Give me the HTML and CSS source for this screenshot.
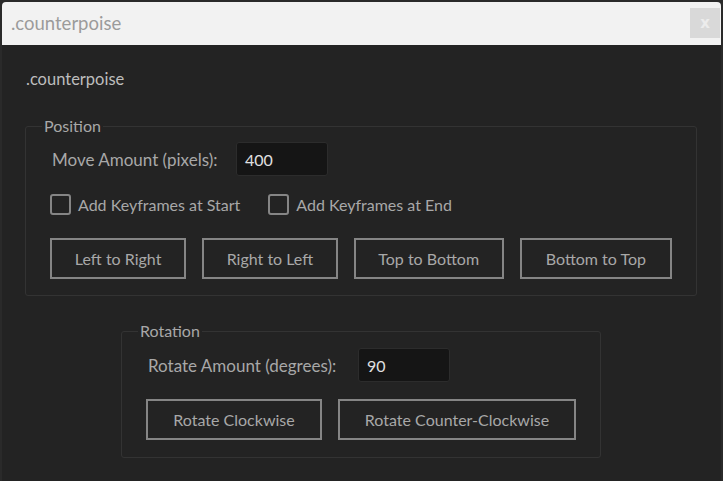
FILE: index.html
```html
<!DOCTYPE html>
<html>
<head>
<meta charset="utf-8">
<link rel="stylesheet" href="styles.css">
</head>
<body>
<div class="window">
  <div class="titlebar">
    <span class="title">.counterpoise</span>
    <span class="close">x</span>
  </div>
  <div class="content">
    <div class="app-label">.counterpoise</div>
    <fieldset class="group group-position">
      <legend>Position</legend>
      <div class="field-row">
        <label class="field-label">Move Amount (pixels):</label>
        <div class="input">400</div>
      </div>
      <div class="check-row">
        <label class="check"><span class="box"></span>Add Keyframes at Start</label>
        <label class="check"><span class="box"></span>Add Keyframes at End</label>
      </div>
      <div class="button-row">
        <button class="btn btn-lr">Left to Right</button>
        <button class="btn btn-rl">Right to Left</button>
        <button class="btn btn-tb">Top to Bottom</button>
        <button class="btn btn-bt">Bottom to Top</button>
      </div>
    </fieldset>
    <fieldset class="group group-rotation">
      <legend>Rotation</legend>
      <div class="field-row">
        <label class="field-label">Rotate Amount (degrees):</label>
        <div class="input">90</div>
      </div>
      <div class="button-row rot-buttons">
        <button class="btn btn-cw">Rotate Clockwise</button>
        <button class="btn btn-ccw">Rotate Counter-Clockwise</button>
      </div>
    </fieldset>
  </div>
</div>
</body>
</html>
```
FILE: styles.css
```css
* { box-sizing: border-box; }
html, body { margin: 0; padding: 0; }
body {
  width: 723px;
  height: 481px;
  background: #2b2b2b;
  font-family: "Lato", "Open Sans", sans-serif;
  overflow: hidden;
}
.window {
  width: 723px;
  height: 481px;
  padding: 2px 2px 0 2px;
  background: #2a2a2a;
  display: flex;
  flex-direction: column;
}
.titlebar {
  height: 43px;
  background: #f2f2f2;
  border-radius: 4px 4px 0 0;
  display: flex;
  align-items: center;
  justify-content: space-between;
  padding-left: 9px;
  padding-right: 1px;
  flex-shrink: 0;
}
.title {
  color: #9b9b9b;
  font-size: 18.5px;
  margin-top: -2px;
}
.close {
  width: 30px;
  height: 30px;
  background: #d9d9d9;
  color: #ececec;
  font-size: 15px;
  font-weight: bold;
  display: flex;
  align-items: center;
  justify-content: center;
  margin-top: -1px;
  font-family: "DejaVu Sans", sans-serif;
}
.content {
  flex: 1;
  background: #232323;
  padding: 24px 24px 0 23px;
  display: flex;
  flex-direction: column;
}
.app-label {
  color: #bdbdbd;
  font-size: 16.5px;
  line-height: 20px;
  margin-left: 1px;
}
.group {
  margin: 0;
  border: 1px solid #333333;
  border-radius: 3px;
  padding: 0 24px 16px 24px;
  min-width: 0;
}
.group legend {
  color: #a8a8a8;
  font-size: 16px;
  line-height: 20px;
  padding: 0 2px;
  margin-left: -8px;
}
.group-position {
  margin-top: 27px;
}
.group-rotation {
  margin-top: 25px;
  align-self: center;
  padding-bottom: 17px;
}
.field-row {
  display: flex;
  align-items: center;
  margin-top: 6px;
  height: 34px;
}
.group-rotation .field-row { margin-top: 7px; }
.field-label {
  color: #a8a8a8;
  font-size: 17px;
  margin-left: 2px;
}
.group-position .field-label { width: 184px; }
.group-rotation .field-label { width: 210px; }
.input {
  width: 92px;
  height: 34px;
  background: #151515;
  border: 1px solid #2c2c2c;
  border-radius: 3px;
  color: #e0e0e0;
  font-size: 16px;
  padding-left: 8px;
  display: flex;
  align-items: center;
}
.check-row {
  display: flex;
  margin-top: 18px;
  height: 20px;
  align-items: center;
}
.check {
  display: flex;
  align-items: center;
  color: #a8a8a8;
  font-size: 16px;
}
.check + .check { margin-left: 28px; }
.box {
  width: 21px;
  height: 21px;
  border: 2px solid #858585;
  border-radius: 3px;
  margin-right: 7px;
}
.button-row {
  display: flex;
  gap: 16px;
  margin-top: 24px;
}
.rot-buttons { margin-top: 17px; }
.btn {
  height: 41px;
  background: #232323;
  border: 2px solid #858585;
  color: #a8a8a8;
  font-family: inherit;
  font-size: 16px;
  padding: 0;
}
.btn-lr { width: 137px; }
.btn-rl { width: 136px; }
.btn-tb { width: 151px; }
.btn-bt { width: 153px; }
.btn-cw { width: 176px; }
.btn-ccw { width: 238px; }
```
